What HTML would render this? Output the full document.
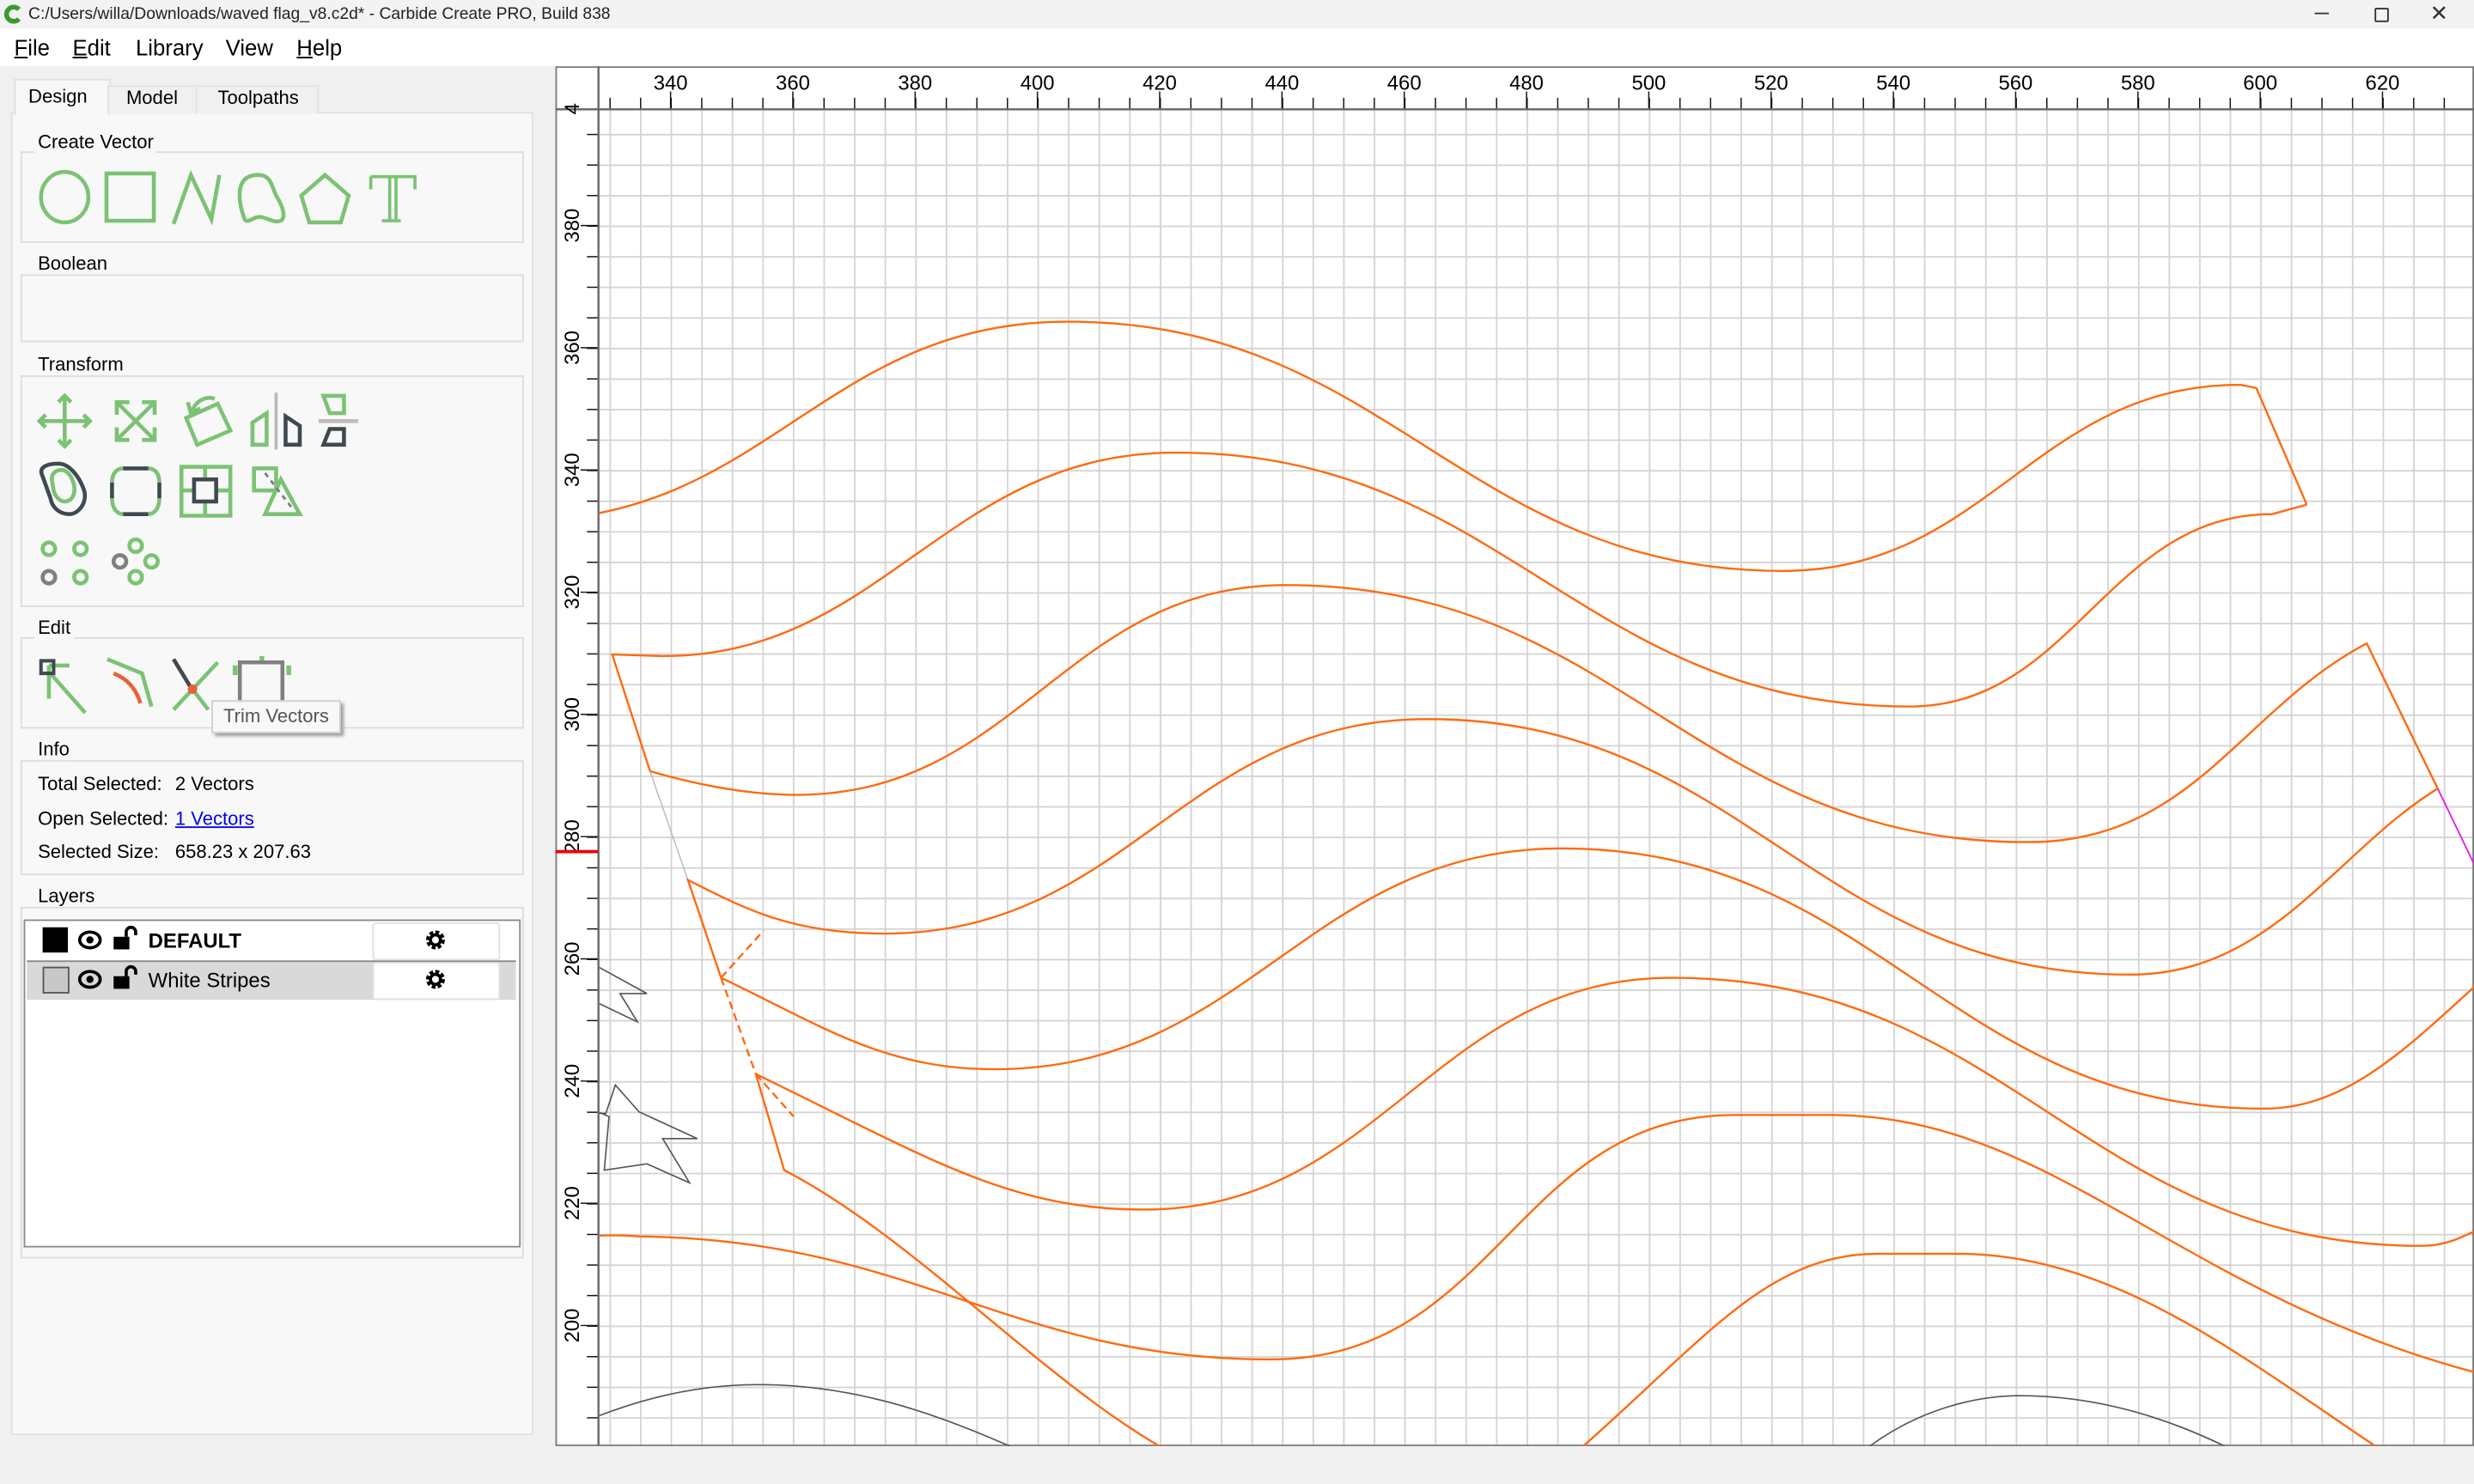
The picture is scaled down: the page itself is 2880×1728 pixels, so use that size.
<!DOCTYPE html>
<html><head><meta charset="utf-8">
<style>
html,body{margin:0;padding:0;background:#f0f0f0;overflow:hidden;width:2880px;height:1728px}
#w{position:absolute;left:0;top:0;width:1568px;height:941px;transform:scale(1.836735,1.836344);transform-origin:0 0;font-family:"Liberation Sans",sans-serif;color:#000;background:#f0f0f0}
.a{position:absolute}
.t{font-size:12px;white-space:nowrap}
.grp{position:absolute;border:1px solid #dcdcdc;background:#f8f8f8}
.gt{position:absolute;font-size:12px;background:#f8f8f8;padding:0 2px}
</style></head><body><div id="w">
<div class="a" style="left:0;top:0;width:1568px;height:18px;background:#f3f3f3"></div>
<svg class="a" style="left:2px;top:3px" width="12" height="12" viewBox="0 0 12 12"><path d="M10 3 A4.5 4.5 0 1 0 10 9" stroke="#3a9a2c" stroke-width="3" fill="none"/></svg>
<div class="a" style="left:18px;top:3px;font-size:10.5px;color:#222">C:/Users/willa/Downloads/waved flag_v8.c2d* - Carbide Create PRO, Build 838</div>
<div class="a" style="left:1467px;top:8px;width:9px;height:1px;background:#333"></div>
<div class="a" style="left:1505px;top:5px;width:7px;height:7px;border:1px solid #333;border-radius:1px"></div>
<div class="a" style="left:1540px;top:0px;font-size:14px;color:#333">✕</div>
<div class="a" style="left:0;top:18px;width:1568px;height:24px;background:#fff"></div>
<div class="a" style="top:22px;left:9px;font-size:14px"><u>F</u>ile</div>
<div class="a" style="top:22px;left:46px;font-size:14px"><u>E</u>dit</div>
<div class="a" style="top:22px;left:86px;font-size:14px">Library</div>
<div class="a" style="top:22px;left:143px;font-size:14px">View</div>
<div class="a" style="top:22px;left:188px;font-size:14px"><u>H</u>elp</div>
<div class="a" style="left:7px;top:71px;width:331px;height:839px;background:#f8f8f8;border:1px solid #e0e0e0;box-sizing:border-box"></div>
<div class="a" style="left:9px;top:50px;width:59px;height:22px;background:#f8f8f8;border:1px solid #e0e0e0;border-bottom:none"></div>
<div class="a" style="left:68px;top:54px;width:56px;height:17px;background:#f0f0f0;border:1px solid #e3e3e3;border-bottom:none"></div>
<div class="a" style="left:124px;top:54px;width:76px;height:17px;background:#f0f0f0;border:1px solid #e3e3e3;border-bottom:none"></div>
<div class="a t" style="left:18px;top:54px">Design</div>
<div class="a t" style="left:80px;top:55px">Model</div>
<div class="a t" style="left:138px;top:55px">Toolpaths</div>

<div class="grp" style="left:13px;top:96px;width:317px;height:56px"></div><div class="gt" style="left:22px;top:83px">Create Vector</div>
<div class="grp" style="left:13px;top:174px;width:317px;height:41px"></div><div class="gt" style="left:22px;top:160px">Boolean</div>
<div class="grp" style="left:13px;top:238px;width:317px;height:145px"></div><div class="gt" style="left:22px;top:224px">Transform</div>
<div class="grp" style="left:13px;top:404px;width:317px;height:56px"></div><div class="gt" style="left:22px;top:391px">Edit</div>
<div class="grp" style="left:13px;top:482px;width:317px;height:71px"></div><div class="gt" style="left:22px;top:468px">Info</div>
<div class="grp" style="left:13px;top:575px;width:317px;height:221px"></div><div class="gt" style="left:22px;top:561px">Layers</div>

<svg class="a" style="left:0;top:0" width="340" height="470" viewBox="0 0 340 470" fill="none" stroke-linejoin="miter">
<g stroke="#7cc274" stroke-width="2.5">
<ellipse cx="41" cy="125" rx="15" ry="16"/>
<rect x="67.5" y="110" width="30" height="30"/>
<path d="M110 142 L121 111 L134 139 L139 111"/>
<path d="M155 139 C150 125 150 112 162 111 C172 110 172 118 175 124 C180 132 181 138 178 140 C172 142 168 136 162 138 C158 140 156 141 155 139Z"/>
<path d="M206 111 L221 124 L216 141 L196 141 L191 124Z"/>
<path d="M235 112 L263 112 L263 120 M235 112 L235 120 M247 112 L247 140 L242 140 L254 140 M251 112 L251 140" stroke-width="2"/>
<path d="M41 251 V283 M25 267 H57 M37 255 L41 251 L45 255 M37 279 L41 283 L45 279 M29 263 L25 267 L29 271 M53 263 L57 267 L53 271"/>
<path d="M74 255 L98 279 M98 255 L74 279 M74 263 V255 H82 M90 255 H98 V263 M74 271 V279 H82 M90 279 H98 V271"/>
<path d="M118 265 L138 256 L146 273 L125 282Z M122 260 C125 253 132 251 136 253 M119 255 L121 262 L127 259"/>
<path d="M160 282 V268 L169 262 V282Z"/>
<path d="M205 251 L209 262 H218 V251Z"/>
<path d="M33 305 C32 300 36 298 39 298 C43 298 46 303 47 308 C48 314 45 318 41 318 C38 318 35 315 34 311Z"/>
<path d="M71 306 C71 300 74 297 78 297 M94 297 C98 297 101 300 101 306 M71 316 C71 322 74 326 78 326 M94 326 C98 326 101 322 101 316"/>
<path d="M115 296 H146 V327 H115Z M130 296 V304 M130 319 V327 M115 311 H123 M138 311 H146"/>
<rect x="161" y="297" width="14" height="14"/>
<path d="M178 304 L190 326 H168Z"/>
<circle cx="31" cy="348" r="4"/><circle cx="51" cy="348" r="4"/><circle cx="51" cy="366" r="4"/>
<circle cx="86" cy="346" r="4"/><circle cx="96" cy="356" r="4"/><circle cx="86" cy="366" r="4"/>
<path d="M31 426 L54 452 M31 422 V443 M31 422 H44"/>
<path d="M68 418 L90 427 L96 448"/>
<path d="M110 450 L138 420 M122 437 L132 450"/>
<path d="M149 428 V422 M183 428 V422" stroke-width="3"/>
<path d="M166 416 V420" stroke-width="3"/>
</g>
<g stroke="#3f4950" stroke-width="2.5">
<path d="M181 282 V264 L190 270 V282Z"/>
<path d="M205 282 L209 272 H218 V282Z"/>
<path d="M27 302 C24 296 30 294 37 294 C44 294 50 302 53 310 C56 318 50 326 44 326 C38 326 33 322 32 316Z"/>
<path d="M78 297 H94 M78 326 H94 M71 306 V316 M101 306 V316"/>
<rect x="123" y="304" width="14" height="14"/>
<rect x="26" y="419" width="8" height="8" stroke-width="2.2"/>
<path d="M110 418 L121 436"/>
</g>
<path d="M175 249 V285" stroke="#b9b9b9" stroke-width="2"/>
<path d="M202 267 H227" stroke="#bdbdbd" stroke-width="2.5"/>
<path d="M168 300 L185 322" stroke="#7a7a7a" stroke-width="1.5" stroke-dasharray="3 3"/>
<g stroke="#808080" stroke-width="2.5"><circle cx="31" cy="366" r="4"/><circle cx="76" cy="356" r="4"/><path d="M152 448 V420 H179 V448"/></g>
<path d="M72 427 C80 430 86 436 89 446" stroke="#e8613a" stroke-width="2.5"/>
<circle cx="122" cy="437" r="3" fill="#e8613a"/>
</svg>
<div class="a" style="left:134px;top:444px;width:80px;height:19px;background:#f8f8f8;border:1px solid #cfcfcf;box-shadow:2px 2px 2px #999;font-size:12px;color:#555;text-align:center;line-height:19px">Trim Vectors</div>
<div class="a t" style="left:24px;top:490px">Total Selected:</div><div class="a t" style="left:111px;top:490px">2 Vectors</div>
<div class="a t" style="left:24px;top:512px">Open Selected:</div><div class="a t" style="left:111px;top:512px;color:#0000ee;text-decoration:underline">1 Vectors</div>
<div class="a t" style="left:24px;top:533px">Selected Size:</div><div class="a t" style="left:111px;top:533px">658.23 x 207.63</div>
<div class="a" style="left:15px;top:583px;width:313px;height:206px;background:#fff;border:1px solid #8a8a8a"></div>
<div class="a" style="left:17px;top:609px;width:310px;height:24px;background:#d9d9d9;border-top:1px solid #888"></div>
<div class="a" style="left:27px;top:588px;width:16px;height:16px;background:#000"></div>
<div class="a" style="left:27px;top:613px;width:15px;height:15px;background:#c8c8c8;border:1px solid #555"></div>
<div class="a" style="left:236px;top:585px;width:79px;height:22px;background:#fff;border:1px solid #e0e0e0;border-radius:2px"></div>
<div class="a" style="left:236px;top:610px;width:79px;height:22px;background:#fff;border:1px solid #e0e0e0;border-radius:2px"></div>
<div class="a" style="left:94px;top:589px;font-size:13px;font-weight:bold">DEFAULT</div>
<div class="a" style="left:94px;top:614px;font-size:13px">White Stripes</div>
<svg class="a" style="left:0;top:580px" width="340" height="60" viewBox="0 580 340 60">
<g id="row"><ellipse cx="57" cy="596" rx="6.5" ry="5" fill="none" stroke="#000" stroke-width="2"/><circle cx="57" cy="596" r="2.3" fill="#000"/>
<rect x="72" y="594" width="10" height="8" fill="#000"/><path d="M80 594 V591 A3 3 0 0 1 86 591 V593" stroke="#000" stroke-width="2" fill="none"/>
<circle cx="276" cy="596" r="4.5" fill="none" stroke="#000" stroke-width="3" stroke-dasharray="2.2 1.3"/><circle cx="276" cy="596" r="3.2" fill="none" stroke="#000" stroke-width="2"/></g>
<use href="#row" y="25"/>
</svg>

<svg class="a" style="left:352px;top:42px" width="1216" height="875" viewBox="352 42 1216 875">
<defs>
<pattern id="gv" x="425" y="0" width="19.375" height="10" patternUnits="userSpaceOnUse"><rect x="0" y="0" width="1" height="10" fill="#d4d4d4"/></pattern>
<pattern id="gh" x="0" y="143" width="10" height="19.375" patternUnits="userSpaceOnUse"><rect x="0" y="0" width="10" height="1" fill="#d4d4d4"/></pattern>
<pattern id="tv" x="425" y="0" width="19.375" height="10" patternUnits="userSpaceOnUse"><rect x="0" y="0" width="0.8" height="10" fill="#111"/></pattern>
<pattern id="th" x="0" y="143" width="10" height="19.375" patternUnits="userSpaceOnUse"><rect x="0" y="0" width="10" height="0.8" fill="#111"/></pattern>
<clipPath id="cv"><rect x="380" y="70" width="1190" height="848"/></clipPath>
</defs>
<rect x="352" y="42" width="1216" height="875" fill="#fff"/>
<rect x="380" y="70" width="1188" height="847" fill="url(#gv)"/>
<rect x="380" y="70" width="1188" height="847" fill="url(#gh)"/>
<rect x="380" y="62" width="1188" height="7" fill="url(#tv)"/>
<rect x="372" y="70" width="7" height="847" fill="url(#th)"/>
<g stroke="#111" stroke-width="0.8">
<path d="M425 58V69M502.5 58V69M580 58V69M657.5 58V69M735 58V69M812.5 58V69M890 58V69M967.5 58V69M1045 58V69M1122.5 58V69M1200 58V69M1277.5 58V69M1355 58V69M1432.5 58V69M1510 58V69"/>
<path d="M368 143H379M368 220.5H379M368 298H379M368 375.5H379M368 453H379M368 530.5H379M368 608H379M368 685.5H379M368 763H379M368 840.5H379"/>
</g>
<rect x="352.5" y="42.5" width="1215" height="874" fill="none" stroke="#777"/>
<path d="M352 69.3H1568M379.3 42V917" stroke="#666" stroke-width="1.3"/>
<g font-family="Liberation Sans, sans-serif" font-size="13" fill="#000" text-anchor="middle">
<text x="425" y="57">340</text><text x="502.5" y="57">360</text><text x="580" y="57">380</text><text x="657.5" y="57">400</text><text x="735" y="57">420</text><text x="812.5" y="57">440</text><text x="890" y="57">460</text><text x="967.5" y="57">480</text><text x="1045" y="57">500</text><text x="1122.5" y="57">520</text><text x="1200" y="57">540</text><text x="1277.5" y="57">560</text><text x="1355" y="57">580</text><text x="1432.5" y="57">600</text><text x="1510" y="57">620</text>
<g transform="rotate(-90)">
<text x="-143" y="367">380</text><text x="-220.5" y="367">360</text><text x="-298" y="367">340</text><text x="-375.5" y="367">320</text><text x="-453" y="367">300</text><text x="-530.5" y="367">280</text><text x="-608" y="367">260</text><text x="-685.5" y="367">240</text><text x="-763" y="367">220</text><text x="-840.5" y="367">200</text><text x="-69" y="367">4</text>
</g></g>
<path d="M352 540H379" stroke="#e00" stroke-width="2"/>
<g clip-path="url(#cv)" fill="none">
<g stroke="#555" stroke-width="0.9">
<path d="M379 613 L410 630 L393 630 L404 648 L379 636"/>
<path d="M379 706 L384 706 L390 688 L405 705 L442 722 L420 722 L437 750 L410 738 L383 742 L386 708 L379 705"/>
<path d="M379 898 C420 882 455 878 480 878 C540 878 590 895 640 917"/>
<path d="M1185 917 C1215 895 1250 885 1280 885 C1330 885 1375 900 1410 917"/>
</g>
<path d="M412 489 L436 558" stroke="#bbb" stroke-width="0.8"/>
<path d="M1545 500 L1570 552" stroke="#e020e0" stroke-width="1"/>
<g stroke="#ff6a10" stroke-width="1.3">
<path d="M330 330 C486 330 521 204 677 204 C881 204 926 362 1130 362 C1260 362 1290 244 1420 244 L1430 246 L1462 320"/>
<path d="M1462 320 L1440 326 C1336 326 1314 448 1210 448 C1001 448 954 287 745 287 C600 287 560 416 420 416 L388 415 L412 489"/>
<path d="M412 489 C450 500 480 504 505 504 C645 504 675 371 815 371 C1027 371 1073 534 1285 534 C1390 534 1420 450 1500 408 L1545 500"/>
<path d="M1545 500 C1480 540 1440 618 1350 618 C1150 618 1105 456 905 456 C749 456 716 592 560 592 C500 592 470 575 436 558 L457 620"/>
<path d="M457 620 C520 650 560 678 630 678 C792 678 828 538 990 538 C1190 538 1235 703 1435 703 C1490 703 1530 660 1580 615"/>
<path d="M479 681 C590 735 640 767 725 767 C876 767 909 620 1060 620 C1274 620 1321 790 1535 790 C1550 790 1560 785 1580 775"/>
<path d="M479 681 L497 742 C580 785 660 875 740 920"/>
<path d="M370 784 C385 783 395 783 405 784 C580 786 640 862 805 862 C950 862 960 707 1100 707 L1160 707 C1300 707 1380 820 1568 870"/>
<path d="M1000 920 C1080 850 1120 795 1190 795 L1240 795 C1340 795 1420 860 1510 920"/>
</g>
<g stroke="#ff6a10" stroke-width="1.3" stroke-dasharray="5 3">
<path d="M457 620 L484 590"/><path d="M457 620 L479 681"/><path d="M479 681 L503 708"/>
</g>
</g>
</svg>
</div></body></html>
